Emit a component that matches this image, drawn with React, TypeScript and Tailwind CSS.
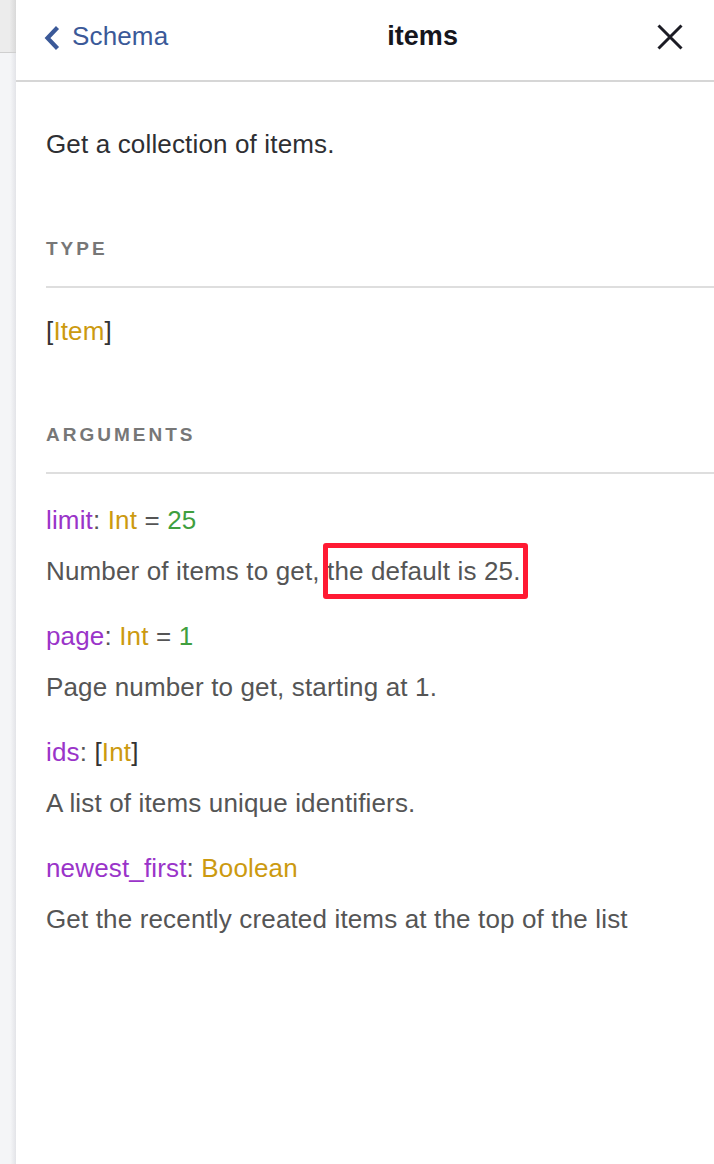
import React from "react";

const font = { fontFamily: '"Liberation Sans", Arial, sans-serif' };

type Arg = {
  name: string;
  type: string;
  list?: boolean;
  def?: string;
  desc: React.ReactNode;
};

const args: Arg[] = [
  {
    name: "limit",
    type: "Int",
    def: "25",
    desc: (
      <>
        Number of items to get,{" "}
        <span className="relative">
          the default is 25.
          <span className="absolute -left-[4px] -right-[7px] -top-[13px] -bottom-[13px] rounded-[3px] border-[5px] border-[#ff1a33]" />
        </span>
      </>
    ),
  },
  { name: "page", type: "Int", def: "1", desc: "Page number to get, starting at 1." },
  { name: "ids", type: "Int", list: true, desc: "A list of items unique identifiers." },
  { name: "newest_first", type: "Boolean", desc: "Get the recently created items at the top of the list" },
];

function SectionTitle({ children }: { children: React.ReactNode }) {
  return (
    <div className="border-b-2 border-[#dedede] pb-[25px] text-[19px] font-bold leading-[24px] tracking-[3px] text-[#777777]">
      {children}
    </div>
  );
}

function ArgRow({ arg }: { arg: Arg }) {
  return (
    <div>
      <div className="leading-[32px] whitespace-nowrap">
        <span className="text-[#9a34c9]">{arg.name}</span>
        <span className="text-[#555555]">: </span>
        {arg.list && <span className="text-[#333333]">[</span>}
        <span className="text-[#cc9a10]">{arg.type}</span>
        {arg.list && <span className="text-[#333333]">]</span>}
        {arg.def && (
          <>
            <span className="text-[#555555]"> = </span>
            <span className="text-[#3f9f3f]">{arg.def}</span>
          </>
        )}
      </div>
      <div className="mt-[19px] leading-[32px] whitespace-nowrap text-[#555555]">{arg.desc}</div>
    </div>
  );
}

export default function App() {
  return (
    <div className="flex min-h-[1164px] w-[714px] overflow-hidden bg-white text-[26px] tracking-[0.15px]" style={font}>
      {/* editor strip behind the panel */}
      <div className="flex w-[16px] shrink-0 flex-col">
        <div className="h-[53px] border-b border-[#cfcfcf] bg-[linear-gradient(to_right,#ececec_60%,#d9d9d9)]" />
        <div className="flex-1 bg-[linear-gradient(to_right,#f4f5f7_65%,#e3e4e8)]" />
      </div>

      <div className="flex min-w-0 flex-1 flex-col">
        <div className="flex h-[82px] items-start border-b-2 border-[#d6d6d6] pl-[28px] pr-[31px] pt-[20px]">
          <div className="flex items-center gap-[12px] text-[#3b5998]">
            <svg width="16" height="26" viewBox="0 0 16 26" className="mt-[3px]">
              <polyline points="13.5,2.5 3.5,13 13.5,23.5" fill="none" stroke="#3b5998" strokeWidth="4.2" />
            </svg>
            <span className="leading-[32px]">Schema</span>
          </div>
          <div className="flex-1 pl-[20px] text-center text-[27px] font-bold leading-[32px] tracking-normal text-[#16161d]">items</div>
          <svg width="26" height="26" viewBox="0 0 26 26" className="mt-[4px]">
            <path d="M1.5 1.5 L24.5 24.5 M24.5 1.5 L1.5 24.5" stroke="#1c1c24" strokeWidth="3" />
          </svg>
        </div>

        <div className="flex flex-col pl-[30px]">
          <div className="mt-[46px] leading-[32px] text-[#2e2f33]">Get a collection of items.</div>

          <div className="mt-[77px]">
            <SectionTitle>TYPE</SectionTitle>
          </div>
          <div className="mt-[27px] leading-[32px]">
            <span className="text-[#333333]">[</span>
            <span className="text-[#cc9a10]">Item</span>
            <span className="text-[#333333]">]</span>
          </div>

          <div className="mt-[76px]">
            <SectionTitle>ARGUMENTS</SectionTitle>
          </div>
          <div className="mt-[30px] flex flex-col gap-[33px]">
            {args.map((a) => (
              <ArgRow key={a.name} arg={a} />
            ))}
          </div>
        </div>
      </div>
    </div>
  );
}
